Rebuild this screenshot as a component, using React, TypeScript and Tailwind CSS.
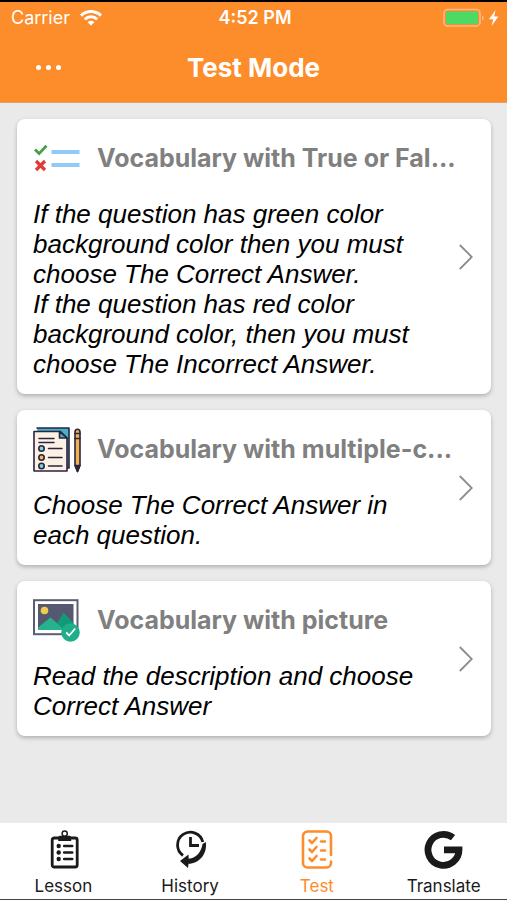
import type { ReactNode } from "react";

function WifiIcon() {
  return (
    <svg viewBox="0 0 22 16" className="h-4 w-[22px]" fill="none" stroke="currentColor" strokeWidth="3" aria-hidden="true">
      <path d="M1 5.6a14.2 14.2 0 0 1 20 0" />
      <path d="M4.8 9.4a8.8 8.8 0 0 1 12.4 0" />
      <path d="M11 15.6 7.6 12.2a4.8 4.8 0 0 1 6.8 0z" fill="currentColor" stroke="none" />
    </svg>
  );
}

function BatteryIcon() {
  return (
    <svg viewBox="0 0 56 20" className="h-5 w-14" aria-hidden="true">
      <rect x="1" y="1.5" width="36" height="16.5" rx="3.5" fill="none" stroke="#fdbb86" strokeWidth="1.6" />
      <rect x="3" y="3.5" width="32" height="12.5" rx="1.5" fill="#4cd964" />
      <path d="M39 7.5c2.4.8 2.4 4.2 0 5z" fill="#fdbb86" />
      <path d="M52.5 2 46 11.2h4.2L48.6 18l6.8-9.5h-4.2z" fill="#fff" />
    </svg>
  );
}

function TrueFalseIcon() {
  return (
    <svg viewBox="0 0 48 48" className="size-12" fill="none" aria-hidden="true">
      <path d="M2 14.5 6.1 18.6 13.5 10.8" stroke="#43a047" strokeWidth="2.8" />
      <path d="M3 26l9 9M12 26l-9 9" stroke="#e53935" strokeWidth="3.2" />
      <path d="M18.5 17H46.500M18.500 30H46.500" stroke="#90caf9" strokeWidth="4" />
    </svg>
  );
}

function ChecklistIcon() {
  return (
    <svg viewBox="0 0 48 48" className="size-12" fill="none" stroke="#2b2540" strokeWidth="1.6" strokeLinejoin="round" strokeLinecap="round" aria-hidden="true">
      <path d="M4 2h32v40H8" fill="#45b1c6" />
      <path d="M1 5.5h26.5l6.5 6.5v33H1z" fill="#fdf0e4" />
      <path d="M26.5 5.5V12H34z" fill="#45b1c6" />
      <path d="M6 12.5h15M6 16.5h15M15.5 22.5H29M15.5 31.5H29M15.5 40H29" strokeWidth="1.5" />
      <circle cx="8.5" cy="22.5" r="2.7" fill="#7ed0dc" />
      <circle cx="8.5" cy="31.5" r="2.7" fill="#f5b855" />
      <circle cx="8.5" cy="40" r="2.7" fill="#7ed0dc" />
      <path d="M42 6c0-3.6 5-3.6 5 0v33l-2.5 6.5L42 39z" fill="#f3b34c" />
      <path d="M42 7.5h5M42 12.5h5" />
      <path d="M42 39.5h5l-2.5 6z" fill="#2b2540" />
    </svg>
  );
}

function PictureIcon() {
  return (
    <svg viewBox="0 0 48 48" className="size-12" aria-hidden="true">
      <rect x="1" y="3.2" width="43.5" height="34" fill="#fff" stroke="#5a5d75" strokeWidth="2" />
      <rect x="5" y="7" width="35.5" height="26" fill="#545871" />
      <circle cx="11.5" cy="13.5" r="3.8" fill="#f3ca4e" />
      <path d="M20 33 30.5 15.5 40.5 26v7z" fill="#119a78" />
      <path d="M5 33V30.500L17.5 20.500 31.500 33z" fill="#25b38d" />
      <circle cx="37.5" cy="35.5" r="9.3" fill="#1fae89" />
      <path d="M33.2 35.5l3 3 6-7" fill="none" stroke="#fff" strokeWidth="1.8" />
    </svg>
  );
}

function Chevron() {
  return (
    <svg viewBox="0 0 14 26" className="h-[26px] w-[14px] shrink-0" fill="none" stroke="#8c8c8c" strokeWidth="1.8" aria-hidden="true">
      <path d="M.8 1 12.8 13 .8 25" />
    </svg>
  );
}

function LessonIcon() {
  return (
    <svg viewBox="0 0 40 40" className="size-10" fill="none" stroke="currentColor" aria-hidden="true">
      <rect x="9.2" y="8" width="25" height="29" rx="2" strokeWidth="2.8" />
      <path d="M15.2 11V8c0-1.600 1-2.200 2.500-2.200h8c1.500 0 2.500.600 2.500 2.200v3z" fill="currentColor" stroke="none" />
      <circle cx="21.700" cy="3.600" r="2.600" strokeWidth="1.500" />
      <path d="M21.200 16h8M21.200 22.500h8M21.200 29h8" strokeWidth="2.600" strokeLinecap="round" />
      <g fill="currentColor" stroke="none">
        <circle cx="15.700" cy="16" r="2.200" />
        <circle cx="15.700" cy="22.500" r="2.200" />
        <circle cx="15.700" cy="29" r="2.200" />
      </g>
    </svg>
  );
}

function HistoryIcon() {
  return (
    <svg viewBox="0 0 40 40" className="size-10" fill="none" stroke="currentColor" aria-hidden="true">
      <path d="M13 25.500A12.800 12.800 0 1 1 32.800 12" strokeWidth="2.800" />
      <path d="M20.500 7v8.500H29" strokeWidth="2.800" />
      <path d="M35.800 12C37.500 24.500 29 33.500 18.500 33.800l-.500 4.200L10 31l8.500-6.500.2 4.300C26.500 28 31.500 21.500 32.500 14z" fill="currentColor" stroke="none" />
    </svg>
  );
}

function TestIcon() {
  return (
    <svg viewBox="0 0 40 40" className="size-10" fill="none" stroke="currentColor" strokeWidth="2.600" strokeLinecap="round" strokeLinejoin="round" aria-hidden="true">
      <path d="M34 25V6a4.500 4.500 0 0 0-4.500-4.500H10.500A4.500 4.500 0 0 0 6 6v27a4.500 4.500 0 0 0 4.500 4.500h19a4.500 4.500 0 0 0 4.500-4.500v-1.500" />
      <path d="M12.500 10.500l2.500 2.500 4.500-5M12.500 19.500l2.500 2.500 4.500-5M12.500 28.500l2.500 2.500 4.500-5" />
      <path d="M24 11.500h4M24 20.500h4M24 29.500h4" />
    </svg>
  );
}

function GoogleIcon() {
  return (
    <svg viewBox="0 0 40 40" className="size-10" fill="none" stroke="currentColor" strokeWidth="6.800" aria-hidden="true">
      <path d="M29 7.600A15.500 15.500 0 1 0 35 19.800H20" />
    </svg>
  );
}

function TestCard({ icon, title, children }: { icon: ReactNode; title: string; children: ReactNode }) {
  return (
    <button type="button" className="flex w-full items-center rounded-lg bg-white pt-4 pr-[18px] pb-[15px] pl-4 text-left shadow-[0_2px_4px_rgba(0,0,0,0.25)]">
      <span className="min-w-0 flex-1">
        <span className="flex items-center gap-4">
          <span className="shrink-0">{icon}</span>
          <span className="text-[25px] font-bold whitespace-nowrap text-[#808080]">{title}</span>
        </span>
        <span className="mt-4 block pr-8 font-['Liberation_Sans',sans-serif] text-[26px] leading-[30px] text-black italic">{children}</span>
      </span>
      <Chevron />
    </button>
  );
}

function Tab({ icon, label, active = false }: { icon: ReactNode; label: string; active?: boolean }) {
  return (
    <a
      href={"#" + label.toLowerCase()}
      aria-current={active ? "page" : undefined}
      className={"flex flex-1 flex-col items-center gap-1.5 text-[17px] leading-5 " + (active ? "text-[#fd8c2a]" : "text-[#1a1a1a]")}
    >
      {icon}
      {label}
    </a>
  );
}

export default function App() {
  return (
    <div className="flex min-h-screen flex-col bg-[#eaeaea] font-['Inter','Liberation_Sans',sans-serif]">
      <header className="border-t-2 border-b border-t-black border-b-[#e0a070] bg-[#fd8c2a] text-white">
        <div className="grid h-8 grid-cols-3 items-center px-2 pl-[11px] text-lg">
          <span className="flex items-center gap-2.5">
            Carrier
            <WifiIcon />
          </span>
          <span className="text-center font-semibold">4:52 PM</span>
          <span className="flex justify-end">
            <BatteryIcon />
          </span>
        </div>
        <div className="grid h-[68px] grid-cols-[1fr_auto_1fr] items-center px-8 pb-0.5">
          <button type="button" aria-label="More" className="flex h-8 w-8 items-center justify-center gap-[5px]">
            <span className="size-[5px] rounded-full bg-white" />
            <span className="size-[5px] rounded-full bg-white" />
            <span className="size-[5px] rounded-full bg-white" />
          </button>
          <h1 className="text-[26px] font-bold">Test Mode</h1>
        </div>
      </header>

      <main className="flex flex-1 flex-col gap-4 py-4 pr-4 pl-[17px]">
        <TestCard icon={<TrueFalseIcon />} title="Vocabulary with True or Fal...">
          If the question has green color background color then you must choose The Correct Answer.
          <br />
          If the question has red color background color, then you must choose The Incorrect Answer.
        </TestCard>
        <TestCard icon={<ChecklistIcon />} title="Vocabulary with multiple-c...">
          Choose The Correct Answer in each question.
        </TestCard>
        <TestCard icon={<PictureIcon />} title="Vocabulary with picture">
          Read the description and choose Correct Answer
        </TestCard>
      </main>

      <nav className="flex border-b border-[#444] bg-white pt-[7px] pb-[3px]">
        <Tab icon={<LessonIcon />} label="Lesson" />
        <Tab icon={<HistoryIcon />} label="History" />
        <Tab icon={<TestIcon />} label="Test" active />
        <Tab icon={<GoogleIcon />} label="Translate" />
      </nav>
    </div>
  );
}
